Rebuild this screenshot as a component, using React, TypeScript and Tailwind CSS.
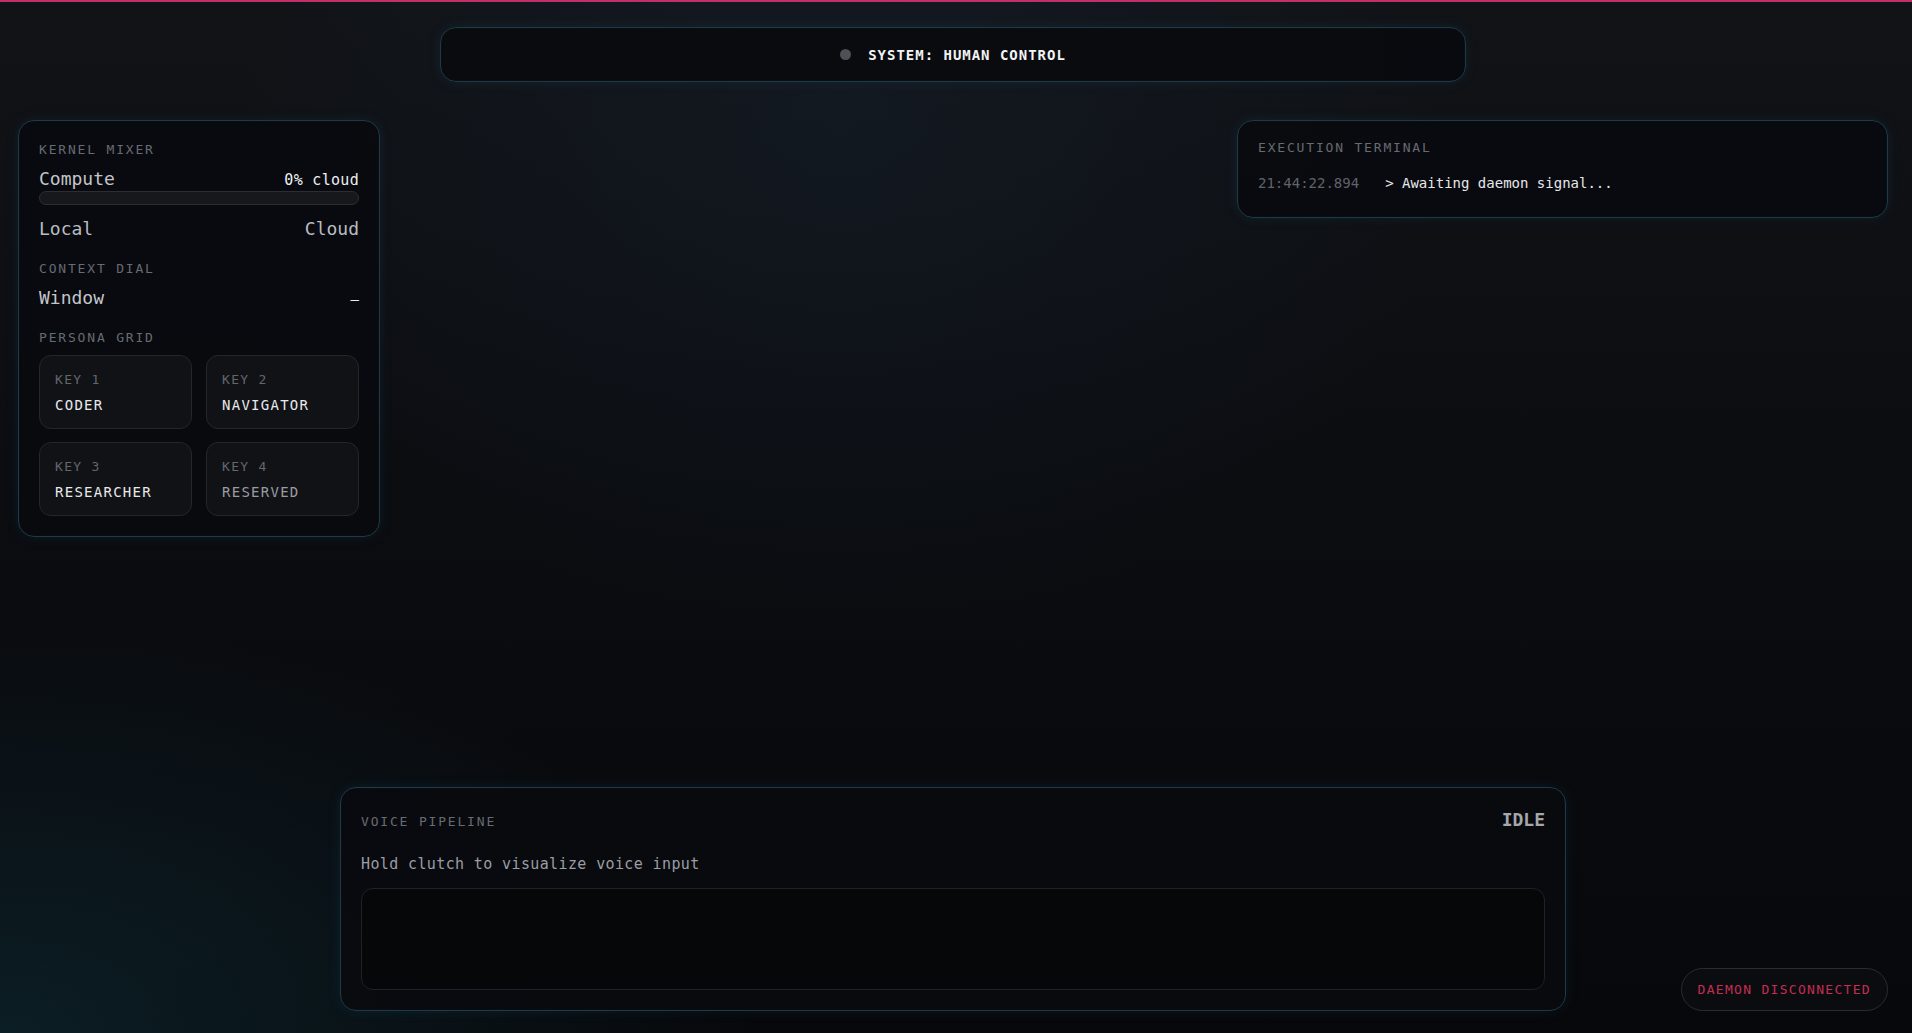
import React from "react";

const panel =
  "border border-[#1c3a4b] bg-[#090b0f]/95 shadow-[0_0_14px_rgba(40,120,160,0.12),inset_0_0_0_1px_rgba(255,255,255,0.01)]";

function Label({ children, className = "" }: { children: React.ReactNode; className?: string }) {
  return (
    <div className={"text-[13px] leading-4 tracking-[0.14em] text-[#676b72] uppercase " + className}>
      {children}
    </div>
  );
}

function PersonaCard({ k, name, dim }: { k: string; name: string; dim?: boolean }) {
  return (
    <div className="h-[74px] rounded-xl border border-[#24262b] bg-[#111216] pl-[15px] pt-4">
      <div className="text-[13px] leading-4 tracking-[0.1em] text-[#62666d]">{k}</div>
      <div
        className={
          "mt-[7px] text-[14px] leading-5 tracking-[0.09em] " +
          (dim ? "text-[#9a9da3]" : "text-[#e8e9eb]")
        }
      >
        {name}
      </div>
    </div>
  );
}

export default function App() {
  return (
    <div className="relative flex h-[1033px] w-full flex-col overflow-hidden bg-[#090b0f] bg-[radial-gradient(ellipse_at_44%_12%,rgba(28,44,62,0.28),transparent_40%),radial-gradient(ellipse_at_0%_100%,rgba(18,62,74,0.4),transparent_28%),linear-gradient(180deg,#111317_0%,#0b0d11_45%,#07080b_100%)] font-['DejaVu_Sans_Mono','Liberation_Mono',monospace]">
      <div className="h-[2px] w-full bg-[#c2306c]" />

      {/* header */}
      <div className="flex justify-center pr-[6px] pt-[25px]">
        <div
          className={
            "flex h-[55px] w-[1026px] items-center justify-center gap-[17px] rounded-2xl " + panel
          }
        >
          <span className="h-[11px] w-[11px] rounded-full bg-[#4d5056]" />
          <span className="text-[14px] font-bold leading-5 tracking-[0.07em] text-[#f2f3f5]">
            SYSTEM: HUMAN CONTROL
          </span>
        </div>
      </div>

      {/* middle */}
      <div className="mt-[38px] flex items-start justify-between pl-[18px] pr-[24px]">
        <div className={"w-[362px] rounded-2xl px-5 pb-5 pt-5 " + panel}>
          <Label className="pt-px">Kernel Mixer</Label>
          <div className="mt-[9px] flex items-baseline justify-between">
            <span className="text-[18px] leading-6 text-[#c3c5c9]">Compute</span>
            <span className="text-[15px] leading-5 tracking-[0.02em] text-[#eceef0]">0% cloud</span>
          </div>
          <div className="h-[14px] w-full rounded-full border border-[#2c2e33] bg-[#17181c]" />
          <div className="mt-3 flex justify-between text-[18px] leading-6 text-[#b9bcc1]">
            <span>Local</span>
            <span>Cloud</span>
          </div>

          <Label className="mt-[20px]">Context Dial</Label>
          <div className="mt-[9px] flex items-baseline justify-between">
            <span className="text-[18px] leading-6 text-[#c3c5c9]">Window</span>
            <span className="text-[14px] leading-5 text-[#eceef0]">—</span>
          </div>

          <Label className="mt-[20px]">Persona Grid</Label>
          <div className="mt-[9px] grid grid-cols-2 gap-x-[14px] gap-y-[13px]">
            <PersonaCard k="KEY 1" name="CODER" />
            <PersonaCard k="KEY 2" name="NAVIGATOR" />
            <PersonaCard k="KEY 3" name="RESEARCHER" />
            <PersonaCard k="KEY 4" name="RESERVED" dim />
          </div>
        </div>

        <div className={"w-[651px] rounded-2xl px-5 pb-6 pt-[19px] " + panel}>
          <Label>Execution Terminal</Label>
          <div className="mt-[17px] flex text-[14px] leading-5">
            <span className="mr-[26px] text-[#5f636a]">21:44:22.894</span>
            <span className="text-[#e6e7ea]">&gt; Awaiting daemon signal...</span>
          </div>
        </div>
      </div>

      <div className="flex-1" />

      {/* bottom */}
      <div className="grid grid-cols-[1fr_1226px_1fr] items-end pb-[22px] pr-[6px]">
        <div />
        <div className={"rounded-2xl px-5 pb-5 pt-[18px] " + panel}>
          <div className="flex items-baseline justify-between">
            <Label>Voice Pipeline</Label>
            <span className="text-[18px] font-bold leading-7 text-[#a4a7ac]">IDLE</span>
          </div>
          <div className="mt-[19px] text-[15px] leading-[22px] tracking-[0.025em] text-[#9a9da3]">
            Hold clutch to visualize voice input
          </div>
          <div className="mt-[13px] h-[102px] rounded-xl border border-[#1f2125] bg-[#060709]" />
        </div>
        <div className="flex justify-end pr-[18px]">
          <div className="flex h-[43px] items-center rounded-full border border-[#2a2c31] bg-[#0b0c10] px-4 text-[13px] leading-4 tracking-[0.1em] text-[#c42e52]">
            DAEMON DISCONNECTED
          </div>
        </div>
      </div>
    </div>
  );
}
